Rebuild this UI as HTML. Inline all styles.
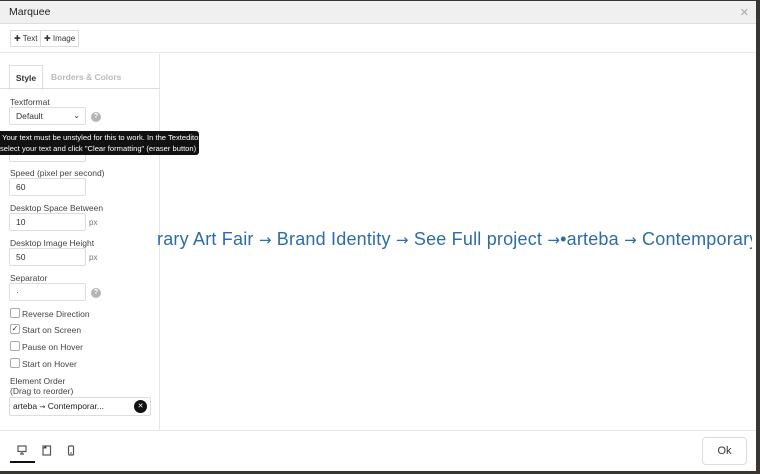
<!DOCTYPE html>
<html><head><meta charset="utf-8"><style>
*{box-sizing:border-box;margin:0;padding:0}
body{width:760px;height:474px;overflow:hidden;background:#3a3530;font-family:"Liberation Sans",sans-serif;position:relative;font-size:8px;color:#333}
.modal{position:absolute;left:0;top:1px;width:756px;height:470px;background:#fff;overflow:hidden}
.title{height:23px;background:#f0f0f0;border-bottom:1px solid #ddd;font-size:10.5px;line-height:23px;padding-left:9px;color:#222}
.close{position:absolute;right:7px;top:5px;color:#aaa;font-size:11px}
.tb{height:29px;border-bottom:1px solid #e8e8e8;position:relative}
.btn{position:absolute;top:6px;height:17px;border:1px solid #ddd;font-size:8px;line-height:15px;padding:0 3px;color:#333;background:#fff}
.left{position:absolute;left:0;top:53px;width:160px;height:376px;border-right:1px solid #e6e6e6}
.tabs{position:absolute;left:9px;top:10px;height:24px}
.tab1{position:absolute;left:0;top:0;width:34px;height:25px;border:1px solid #ddd;border-bottom:none;background:#fff;font-weight:bold;font-size:8.5px;line-height:24px;text-align:center}
.tab2{position:absolute;left:42px;top:0;font-size:8.5px;line-height:24px;color:#bbb;white-space:nowrap;font-weight:bold}
.tabline{position:absolute;left:0;top:87px;width:160px;border-top:1px solid #ddd}
.lbl{position:absolute;left:10px;font-size:8.5px;color:#444}
.inp{position:absolute;left:9px;width:77px;height:18px;border:1px solid #ddd;border-radius:2px;font-size:8.5px;line-height:16px;padding-left:6px}
.px{position:absolute;left:89px;font-size:8px;color:#777}
.q{position:absolute;left:91px;width:10px;height:10px;border-radius:50%;background:#b5b5b5;color:#fff;font-size:7px;line-height:10px;text-align:center;font-weight:bold}
.cb{position:absolute;left:10px;width:10px;height:10px;border:1px solid #aaa;border-radius:2px}
.cbl{position:absolute;left:22px;font-size:8.5px;color:#444}
.tip{position:absolute;left:0;top:130px;width:199px;height:24px;background:#111;color:#fff;font-size:7.6px;line-height:11px;padding:1px 0 0 0;border-radius:0 3px 3px 0;white-space:nowrap;overflow:hidden}
.foot{position:absolute;left:0;top:429px;width:756px;height:41px;border-top:1px solid #e6e6e6}
.ok{position:absolute;left:702px;top:6px;width:45px;height:28px;border:1px solid #ddd;border-radius:4px;text-align:center;line-height:26px;font-size:11px;color:#333}
.mq{position:absolute;left:161px;top:228px;width:595px;overflow:hidden;white-space:nowrap;font-size:18px;letter-spacing:0.2px;color:#2d6ca8;line-height:20px}
.mq b{font-weight:normal;font-family:"DejaVu Sans",sans-serif;font-size:15px}
</style></head><body>
<div class="modal">
<div class="title">Marquee</div><div class="close">✕</div>
<div class="tb"><div class="btn" style="left:10px">✚ Text</div><div class="btn" style="left:40px">✚ Image</div></div>
<div class="left"></div>
<div class="tabs" style="top:64px"><div class="tab1">Style</div><div class="tab2">Borders &amp; Colors</div></div>
<div class="tabline"></div>
<div class="lbl" style="top:96px">Textformat</div>
<div class="inp" style="top:106px">Default<span style="position:absolute;right:5px;top:0;font-size:8px">⌄</span></div>
<div class="q" style="top:111px">?</div>
<div class="inp" style="top:143px"></div>
<div class="lbl" style="top:167px">Speed (pixel per second)</div>
<div class="inp" style="top:177px">60</div>
<div class="lbl" style="top:202px">Desktop Space Between</div>
<div class="inp" style="top:212px">10</div><div class="px" style="top:217px">px</div>
<div class="lbl" style="top:237px">Desktop Image Height</div>
<div class="inp" style="top:247px">50</div><div class="px" style="top:252px">px</div>
<div class="lbl" style="top:272px">Separator</div>
<div class="inp" style="top:282px">·</div>
<div class="q" style="top:287px">?</div>
<div class="cb" style="top:307px"></div><div class="cbl" style="top:308px">Reverse Direction</div>
<div class="cb" style="top:323px;font-size:8px;line-height:8px;text-align:center">✓</div><div class="cbl" style="top:324px">Start on Screen</div>
<div class="cb" style="top:340px"></div><div class="cbl" style="top:341px">Pause on Hover</div>
<div class="cb" style="top:357px"></div><div class="cbl" style="top:358px">Start on Hover</div>
<div class="lbl" style="top:375px">Element Order</div>
<div class="lbl" style="top:385px">(Drag to reorder)</div>
<div class="inp" style="top:396px;width:142px;left:9px;height:19px;padding-left:3px;color:#222">arteba <span style="font-family:'DejaVu Sans';font-size:7px">→</span> Contemporar...<span style="position:absolute;right:3px;top:2px;width:13px;height:13px;border-radius:50%;background:#111;color:#fff;font-size:7px;line-height:13px;text-align:center">✕</span></div>
<div class="tip">&nbsp;Your text must be unstyled for this to work. In the Texteditor<br>select your text and click "Clear formatting" (eraser button)</div>
<div class="mq" style="margin-left:-4px">rary Art Fair <b>→</b> Brand Identity <b>→</b> See Full project <b>→</b>•arteba <b>→</b> Contemporary</div>
<div class="foot">
<svg style="position:absolute;left:17px;top:14px" width="10" height="10" viewBox="0 0 10 10"><rect x="1" y="1" width="8" height="5.5" fill="none" stroke="#555" stroke-width="1.2"/><path d="M5 6.5V9M3 9h4" stroke="#555" stroke-width="1.2"/></svg>
<div style="position:absolute;left:10px;top:30px;width:25px;height:2px;background:#111"></div>
<svg style="position:absolute;left:42px;top:14px" width="10" height="11" viewBox="0 0 10 11"><rect x="1" y="1" width="7.5" height="9" fill="none" stroke="#555" stroke-width="1.2"/><path d="M1 3h3V1" stroke="#555" stroke-width="1"/></svg>
<svg style="position:absolute;left:67px;top:14px" width="8" height="11" viewBox="0 0 8 11"><rect x="1.5" y="1" width="5" height="9" rx="1" fill="none" stroke="#555" stroke-width="1.2"/><path d="M3 8h2" stroke="#555"/></svg>
<div class="ok">Ok</div>
</div>
</div>
</body></html>
